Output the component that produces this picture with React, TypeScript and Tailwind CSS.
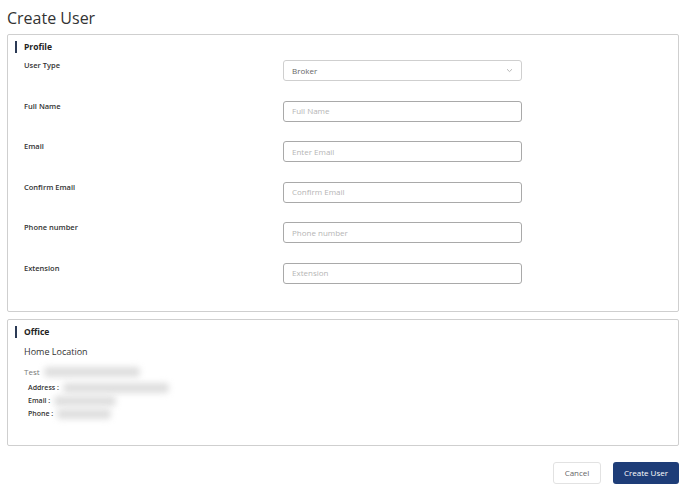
import React from "react";

const fields = [
  { label: "User Type", placeholder: "Broker", select: true },
  { label: "Full Name", placeholder: "Full Name" },
  { label: "Email", placeholder: "Enter Email" },
  { label: "Confirm Email", placeholder: "Confirm Email" },
  { label: "Phone number", placeholder: "Phone number" },
  { label: "Extension", placeholder: "Extension" },
];

function Blur({ w }: { w: number }) {
  return (
    <span
      className="inline-block h-[10px] rounded-sm bg-[#dedede] blur-[3px] ml-[4px]"
      style={{ width: w }}
    />
  );
}

export default function App() {
  return (
    <div
      className="w-[688px] h-[492px] bg-white text-[#222] pl-[7px] pr-[9px] overflow-hidden"
      style={{ fontFamily: '"Open Sans", "Liberation Sans", sans-serif' }}
    >
      <h1 className="text-[16px] font-normal leading-none pt-[10px] pb-[8px] text-[#333]">Create User</h1>
      <div className="border border-[#cfcfcf] rounded-[2px] h-[278px] pl-[7px] pt-[6px]">
        <div className="flex items-center gap-[7px] h-[12px]">
          <div className="w-[2px] h-[12px] bg-[#2b3a55]" />
          <span className="text-[8.5px] font-bold leading-none">Profile</span>
        </div>
        <div className="pl-[9px] pt-[6px]">
          {fields.map((f) => (
            <div key={f.label} className="flex h-[40.6px]">
              <div className="w-[259px] text-[7.5px] font-semibold text-[#333] leading-[12px]">{f.label}</div>
              <div
                className={`mt-[1px] w-[239px] h-[21px] border rounded-[3px] flex items-center justify-between px-[8px] text-[8px] ${
                  f.select ? "border-[#cfcfcf] text-[#666]" : "border-[#a9a9a9] text-[#b5b5b5]"
                }`}
              >
                <span>{f.placeholder}</span>
                {f.select && (
                  <svg width="7" height="5" viewBox="0 0 7 5" fill="none">
                    <path d="M1 1.2L3.5 3.6L6 1.2" stroke="#b0b0b0" strokeWidth="0.9" />
                  </svg>
                )}
              </div>
            </div>
          ))}
        </div>
      </div>
      <div className="mt-[7px] border border-[#cfcfcf] rounded-[2px] h-[127px] pl-[7px] pt-[6px]">
        <div className="flex items-center gap-[7px] h-[12px]">
          <div className="w-[2px] h-[12px] bg-[#2b3a55]" />
          <span className="text-[8.5px] font-bold leading-none">Office</span>
        </div>
        <div className="pl-[9px]">
          <div className="text-[9px] text-[#333] mt-[8px] leading-[12px]">Home Location</div>
          <div className="flex items-center text-[8px] text-[#777] mt-[8px] leading-[12px]">
            Test <Blur w={96} />
          </div>
          <div className="pl-[4px] text-[7px] font-semibold text-[#333] leading-[13px] mt-[3px]">
            <div className="flex items-center">Address : <Blur w={106} /></div>
            <div className="flex items-center">Email : <Blur w={62} /></div>
            <div className="flex items-center">Phone : <Blur w={54} /></div>
          </div>
        </div>
      </div>
      <div className="flex justify-end gap-[12px] mt-[16px]">
        <button className="w-[48px] h-[22px] border border-[#e2e2e2] rounded-[3px] text-[8px] text-[#666] bg-white">Cancel</button>
        <button className="w-[66px] h-[22px] rounded-[3px] text-[8px] text-white bg-[#1e3d78]">Create User</button>
      </div>
    </div>
  );
}
